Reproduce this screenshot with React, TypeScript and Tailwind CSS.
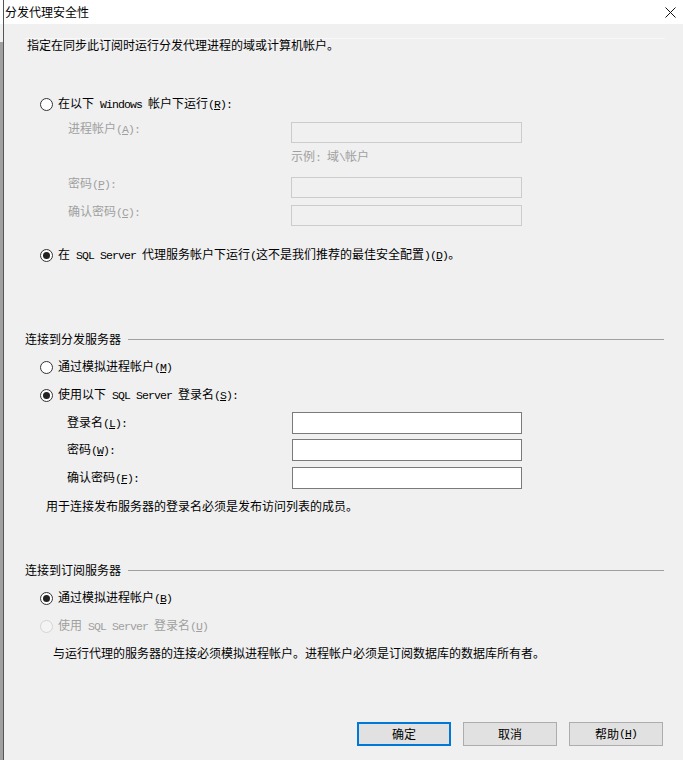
import React from "react";

// ascii runs go to a mono face (like SimSun half-width), "&X" marks the mnemonic letter
function Txt({ s }: { s: string }) {
  const runs: { t: "a" | "c"; v: string; u?: boolean }[] = [];
  for (let i = 0; i < s.length; i++) {
    const ch = s[i];
    if (ch === "&") {
      runs.push({ t: "a", v: s[i + 1], u: true });
      i++;
      continue;
    }
    const t = ch.charCodeAt(0) < 128 ? "a" : "c";
    const last = runs[runs.length - 1];
    if (last && last.t === t && !last.u) last.v += ch;
    else runs.push({ t, v: ch });
  }
  return (
    <>
      {runs.map((r, i) =>
        r.t === "a" ? (
          <span
            key={i}
            className={
              r.u
                ? "[font-family:'Liberation_Mono',monospace] text-[11.5px] tracking-[-0.9px] whitespace-pre underline underline-offset-[1px]"
                : "[font-family:'Liberation_Mono',monospace] text-[11.5px] tracking-[-0.9px] whitespace-pre"
            }
          >
            {r.v}
          </span>
        ) : (
          <span key={i}>{r.v}</span>
        )
      )}
    </>
  );
}

function Radio({ checked, disabled }: { checked?: boolean; disabled?: boolean }) {
  return (
    <span
      className={
        disabled
          ? "flex h-[13px] w-[13px] shrink-0 items-center justify-center rounded-full border border-[#d4d4d4] bg-[#f4f4f4]"
          : "flex h-[13px] w-[13px] shrink-0 items-center justify-center rounded-full border border-[#333333] bg-white"
      }
    >
      {checked && <span className="h-[7px] w-[7px] rounded-full bg-[#222222]" />}
    </span>
  );
}

function RadioRow({ label, checked, disabled, mt }: { label: string; checked?: boolean; disabled?: boolean; mt: string }) {
  return (
    <div className={`${mt} ml-[36px] flex h-[16px] items-center gap-[5px] leading-[16px] ${disabled ? "text-[#a0a0a0]" : "text-black"}`}>
      <Radio checked={checked} disabled={disabled} />
      <span className="whitespace-nowrap">
        <Txt s={label} />
      </span>
    </div>
  );
}

function DisabledField({ label, mt }: { label: string; mt: string }) {
  return (
    <div className={`${mt} flex h-[21px] items-start pl-[64px]`}>
      <span className="w-[223px] leading-[12px] text-[#a0a0a0]">
        <Txt s={label} />
      </span>
      <div className="h-[21px] w-[231px] border border-[#cccccc] bg-[#f0f0f0]" />
    </div>
  );
}

function Field({ label, mt }: { label: string; mt: string }) {
  return (
    <div className={`${mt} flex h-[22px] items-center pl-[63px]`}>
      <span className="w-[225px] leading-[12px]">
        <Txt s={label} />
      </span>
      <div className="h-[22px] w-[230px] border border-[#7a7a7a] bg-white" />
    </div>
  );
}

function GroupHeader({ title, mt }: { title: string; mt: string }) {
  return (
    <div className={`${mt} ml-[21px] mr-[19px] flex h-[12px] items-center leading-[12px]`}>
      <span className="whitespace-nowrap">{title}</span>
      <div className="ml-[7px] h-px flex-1 bg-[#a0a0a0]" />
    </div>
  );
}

function Button({ label, primary }: { label: string; primary?: boolean }) {
  return (
    <div
      className={
        primary
          ? "flex h-[24px] w-[94px] items-center justify-center border-2 border-[#0078d7] bg-[#e1e1e1] text-[12px]"
          : "flex h-[24px] w-[94px] items-center justify-center border border-[#adadad] bg-[#e1e1e1] text-[12px]"
      }
    >
      <Txt s={label} />
    </div>
  );
}

export default function App() {
  return (
    <div className="flex h-[760px] w-[683px] overflow-hidden bg-[#f0f0f0] text-[12px] text-black [font-family:'Noto_Sans_CJK_SC',sans-serif]">
      <div className="flex w-[3px] flex-col">
        <div className="h-[24px] bg-white" />
        <div className="h-[18px] bg-[#f0f0f0]" />
        <div className="flex-1 bg-[#a0a0a0]" />
      </div>
      <div className="w-px bg-[#555555]" />

      <div className="flex flex-1 flex-col">
        <div className="flex h-[24px] items-center justify-between bg-white pl-[1px] pr-[7px]">
          <span className="leading-[24px]">分发代理安全性</span>
          <svg width="11" height="11" viewBox="0 0 11 11">
            <path d="M0.5 0.5 L10.5 10.5 M10.5 0.5 L0.5 10.5" stroke="#111" strokeWidth="1" />
          </svg>
        </div>

        <div className="ml-[21px] mt-[14px] h-px w-[640px] bg-[#f8f8f8]" />
        <div className="ml-[23px] h-[12px] leading-[12px]">指定在同步此订阅时运行分发代理进程的域或计算机帐户。</div>

        <RadioRow mt="mt-[45px]" label="在以下 Windows 帐户下运行(&R):" />
        <DisabledField mt="mt-[10px]" label="进程帐户(&A):" />
        <div className="ml-[287px] mt-[7px] h-[12px] leading-[12px] text-[#a0a0a0]">
          <Txt s="示例: 域\帐户" />
        </div>
        <DisabledField mt="mt-[15px]" label="密码(&P):" />
        <DisabledField mt="mt-[7px]" label="确认密码(&C):" />
        <RadioRow mt="mt-[21px]" checked label="在 SQL Server 代理服务帐户下运行(这不是我们推荐的最佳安全配置)(&D)。" />

        <GroupHeader mt="mt-[70px]" title="连接到分发服务器" />
        <RadioRow mt="mt-[14px]" label="通过模拟进程帐户(&M)" />
        <RadioRow mt="mt-[12px]" checked label="使用以下 SQL Server 登录名(&S):" />
        <Field mt="mt-[9px]" label="登录名(&L):" />
        <Field mt="mt-[5px]" label="密码(&W):" />
        <Field mt="mt-[6px]" label="确认密码(&F):" />
        <div className="ml-[42px] mt-[11px] h-[12px] leading-[12px]">用于连接发布服务器的登录名必须是发布访问列表的成员。</div>

        <GroupHeader mt="mt-[52px]" title="连接到订阅服务器" />
        <RadioRow mt="mt-[14px]" checked label="通过模拟进程帐户(&B)" />
        <RadioRow mt="mt-[12px]" disabled label="使用 SQL Server 登录名(&U)" />
        <div className="ml-[49px] mt-[13px] h-[12px] leading-[12px]">与运行代理的服务器的连接必须模拟进程帐户。进程帐户必须是订阅数据库的数据库所有者。</div>

        <div className="mt-[63px] flex justify-end gap-[12px] pr-[20px]">
          <Button primary label="确定" />
          <Button label="取消" />
          <Button label="帮助(&H)" />
        </div>
      </div>
    </div>
  );
}
